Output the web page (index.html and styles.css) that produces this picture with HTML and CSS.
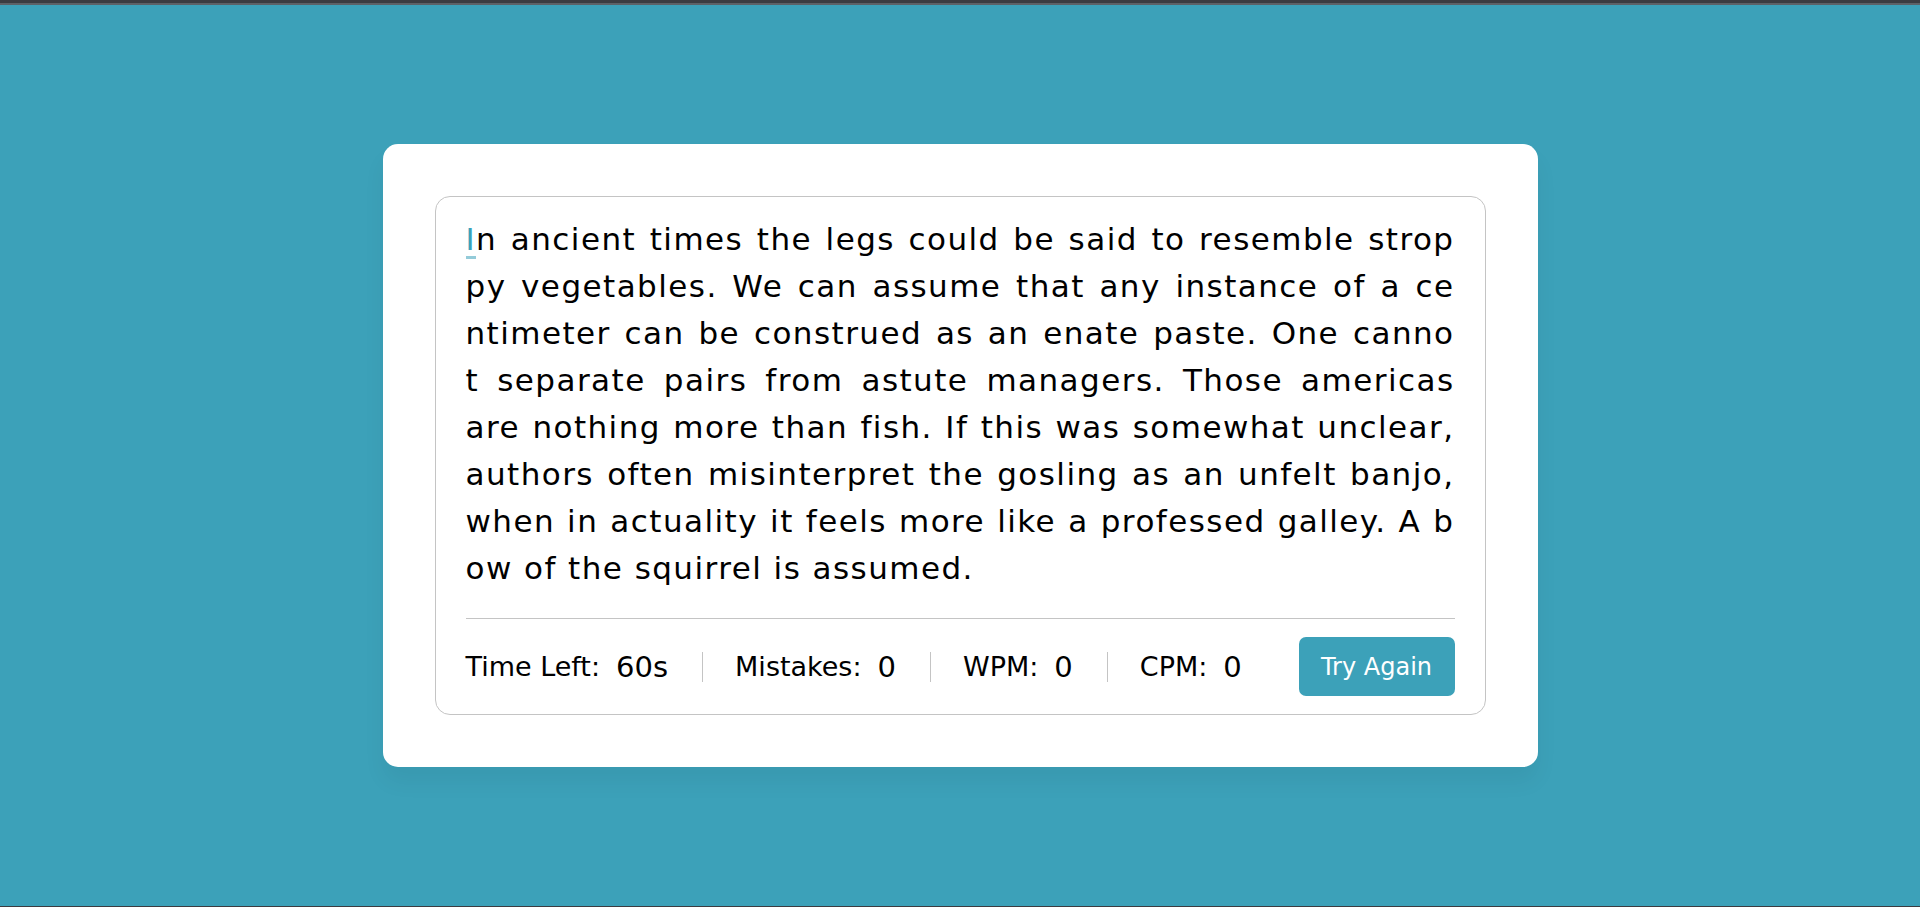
FILE: index.html
```html
<!DOCTYPE html>
<html lang="en">
<head>
<meta charset="utf-8">
<title>Typing Speed Test</title>
<link rel="stylesheet" href="styles.css">
</head>
<body>
<div class="topbar"></div>
<main class="stage">
  <div class="wrapper">
    <div class="content-box">
      <div class="typing-text">
        <div class="line"><span class="active">I</span>n ancient times the legs could be said to resemble strop</div>
        <div class="line">py vegetables. We can assume that any instance of a ce</div>
        <div class="line">ntimeter can be construed as an enate paste. One canno</div>
        <div class="line">t separate pairs from astute managers. Those americas</div>
        <div class="line">are nothing more than fish. If this was somewhat unclear,</div>
        <div class="line">authors often misinterpret the gosling as an unfelt banjo,</div>
        <div class="line">when in actuality it feels more like a professed galley. A b</div>
        <div class="line last">ow of the squirrel is assumed.</div>
      </div>
      <div class="content">
        <ul class="result-details">
          <li><p>Time Left:</p><span><b>60</b>s</span></li>
          <li><p>Mistakes:</p><span>0</span></li>
          <li><p>WPM:</p><span>0</span></li>
          <li><p>CPM:</p><span>0</span></li>
        </ul>
        <button class="btn">Try Again</button>
      </div>
    </div>
  </div>
</main>
<div class="bottombar"></div>
</body>
</html>
```

FILE: styles.css
```css
* { margin: 0; padding: 0; box-sizing: border-box; }

html, body { height: 100%; }

body {
  display: flex;
  flex-direction: column;
  background: #3ca1b9;
  font-family: "DejaVu Sans", Verdana, sans-serif;
  color: #000;
}

.topbar {
  height: 5px;
  flex: none;
  border-top: 3px solid #3b3c41;
  background: #5d6167;
}

.bottombar {
  height: 1px;
  flex: none;
  background: #3b3c41;
}

.stage {
  flex: 1;
  display: flex;
  align-items: center;
  justify-content: center;
}

.wrapper {
  width: 1155px;
  padding: 52px;
  background: #fff;
  border-radius: 15px;
  box-shadow: 0 15px 22px rgba(0, 0, 0, 0.05);
}

.content-box {
  border: 1px solid #c4c4c4;
  border-radius: 15px;
  padding: 19px 30px 0;
}

.typing-text {
  font-size: 31px;
  line-height: 47px;
  letter-spacing: 1.45px;
}

.line {
  white-space: nowrap;
  text-align: justify;
  text-align-last: justify;
}

.line.last {
  text-align-last: left;
}

.active {
  position: relative;
  color: #3ca1b9;
}

.active::before {
  content: "";
  position: absolute;
  left: 0;
  bottom: -2px;
  width: 100%;
  height: 3px;
  background: rgba(60, 161, 185, 0.55);
}

.content {
  margin-top: 26px;
  border-top: 1px solid #c4c4c4;
  padding: 18px 0;
  display: flex;
  align-items: center;
}

.result-details {
  display: flex;
  list-style: none;
  margin-right: auto;
}

.result-details li {
  display: flex;
  align-items: center;
  height: 30px;
  padding-right: 34px;
  white-space: nowrap;
}

.result-details li + li {
  padding-left: 32px;
  border-left: 1px solid #c4c4c4;
}

.result-details p {
  font-size: 27px;
}

.result-details span {
  margin-left: 16px;
  font-size: 29px;
  font-weight: 500;
}

.result-details b {
  font-weight: 500;
}

.btn {
  width: 156px;
  height: 59px;
  border: none;
  border-radius: 7px;
  background: #3ca1b9;
  color: #fff;
  font-family: inherit;
  font-size: 24px;
}
```
